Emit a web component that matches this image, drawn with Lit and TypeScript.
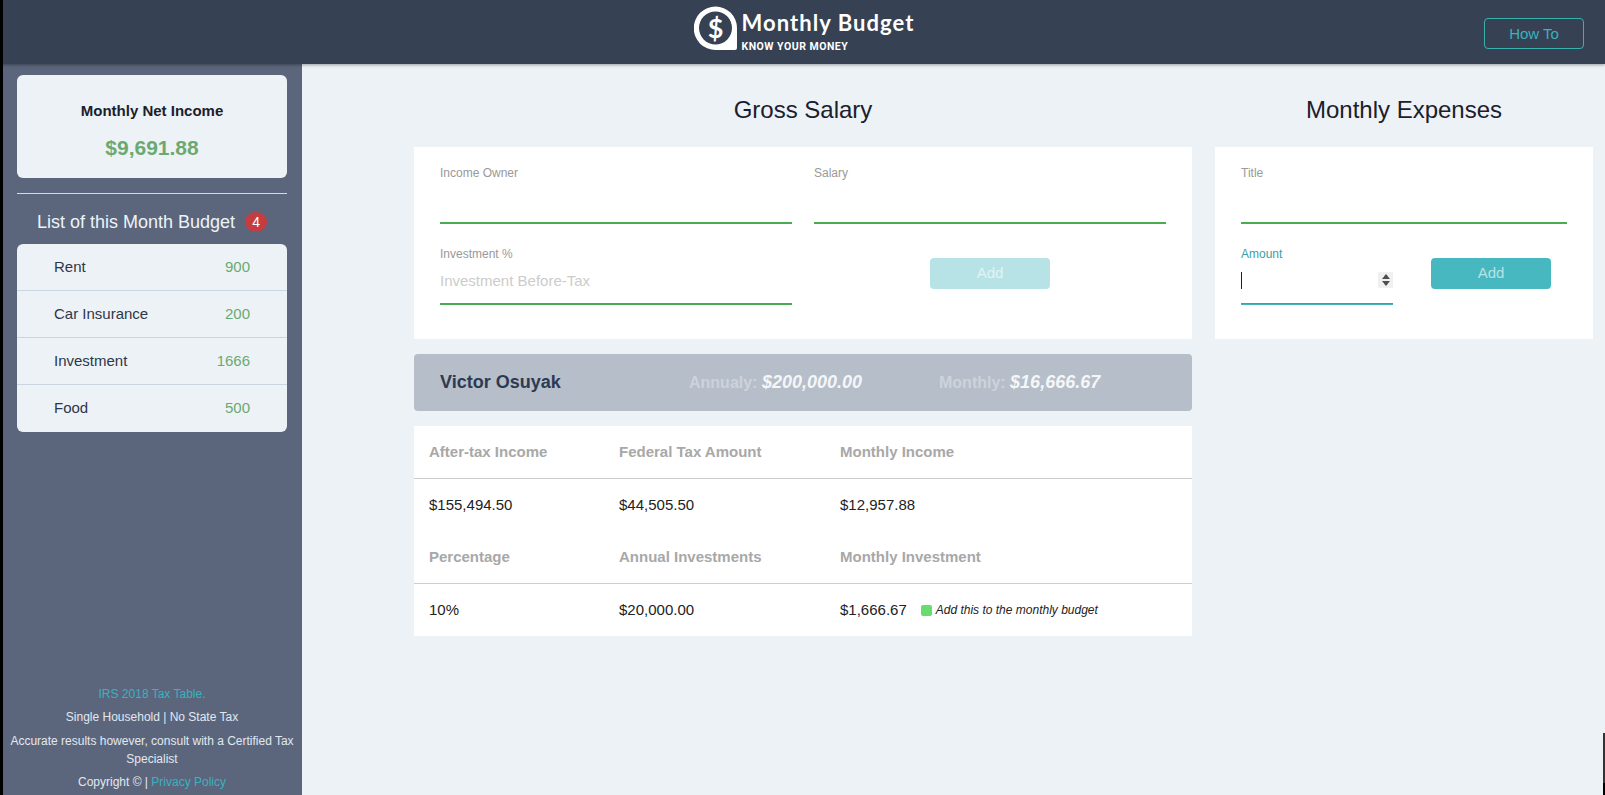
import { LitElement, html, css } from "lit";
import { customElement } from "lit/decorators.js";

@customElement("app-root")
export class AppRoot extends LitElement {
  static styles = css`
    :host { display: block; height: 795px; width: 1605px; overflow: hidden; font-family: "Liberation Sans", Arial, sans-serif; background: #edf2f6; color: #1a202c; position: relative; }
    * { box-sizing: border-box; }
    .edge { position: absolute; left: 0; top: 0; width: 3px; height: 795px; background: #000; z-index: 3; }
    .topbar { height: 64px; background: #364154; display: grid; grid-template-columns: 1fr auto 1fr; align-items: center; box-shadow: 0 1px 3px rgba(0,0,0,.35); position: relative; z-index: 2; padding: 0 21px 0 24px; }
    .logo { display: flex; align-items: flex-start; gap: 5px; color: #fff; margin-top: -6px; }
    .logo svg { display: block; margin-left: 1px; }
    .logo-text { display: flex; flex-direction: column; width: 174px; white-space: nowrap; }
    .logo-title { font-family: "Lato", sans-serif; font-weight: 700; font-size: 22px; line-height: 26px; letter-spacing: 1.05px; margin-top: 4px; }
    .logo-sub { font-family: "Roboto", sans-serif; font-weight: 700; font-size: 10.5px; line-height: 13px; letter-spacing: .5px; margin-top: 4px; }
    .howto { justify-self: end; width: 100px; height: 31px; margin-top: 2px; border: 1px solid #38b2ac; border-radius: 4px; color: #38b2c0; font-size: 15px; display: flex; align-items: center; justify-content: center; }
    .body { display: flex; height: 731px; }
    .side { width: 302px; flex: none; background: #5b667c; padding: 11px 15px 0 17px; display: flex; flex-direction: column; color: #edf2f7; }
    .net { height: 103px; background: #edf2f6; border-radius: 6px; display: flex; flex-direction: column; align-items: center; color: #1a202c; }
    .net b { font-size: 15px; margin-top: 27px; line-height: 18px; }
    .net strong { font-size: 21px; color: #6aaa72; margin-top: 16px; line-height: 24px; }
    .hr { height: 1px; background: #d5dae2; margin-top: 15px; }
    .listhead { display: flex; justify-content: center; align-items: center; gap: 10px; font-size: 18px; height: 50px; padding-top: 6px; }
    .badge { width: 22px; height: 20px; border-radius: 50%; background: #c53d40; color: #fff; font-size: 14px; display: flex; align-items: center; justify-content: center; }
    .list { background: #edf2f6; border-radius: 6px; overflow: hidden; }
    .row { height: 47px; display: flex; justify-content: space-between; align-items: center; padding: 0 37px 2px 37px; font-size: 15px; color: #2d3748; border-bottom: 1px solid #cbd5e0; }
    .row:last-child { border-bottom: 0; }
    .row span:last-child { color: #6aaa72; }
    .foot { margin-top: auto; text-align: center; font-size: 12px; line-height: 18px; color: #e2e8f0; margin-left: -9px; margin-right: -9px; }
    .foot div { margin-bottom: 5.5px; }
    .foot div:last-child { margin-bottom: 4px; }
    .teal { color: #38b2c0; }
    .main { flex: 1; display: grid; grid-template-columns: 778px 378px; column-gap: 23px; padding: 0 12px 0 112px; }
    h2 { font-weight: 400; font-size: 24px; line-height: 28px; text-align: center; margin: 32px 0 23px; color: #1a202c; }
    .panel { background: #fff; height: 192px; padding: 18px 26px; }
    label { display: block; font-size: 12px; line-height: 14px; color: #999; }
    .field { height: 59px; padding-top: 1px; border-bottom: 2px solid #48ac52; }
    .g { display: grid; grid-template-columns: 352px 352px; column-gap: 22px; }
    .ph { font-size: 15px; color: #ccc; margin-top: 11px; line-height: 18px; }
    .btn { width: 120px; height: 31px; border-radius: 4px; background: #48b8c0; color: #b8e2e6; font-size: 15px; display: flex; align-items: center; justify-content: center; margin-top: 12px; padding-bottom: 2px; }
    .btn.dis { background: #b8e3e6; color: #e0f3f5; }
    .f2 { margin-top: 22px; }
    .btncell { display: flex; justify-content: center; align-items: flex-start; }
    .gr { display: grid; grid-template-columns: 152px 1fr; }
    .gr .btncell { justify-content: flex-start; padding-left: 38px; }
    .person { background: #b6bec9; border-radius: 4px; height: 57px; margin-top: 15px; display: flex; align-items: center; padding-left: 26px; }
    .person .name { font-weight: 700; font-size: 18px; color: #2d3a52; width: 249px; }
    .person .m { font-weight: 700; font-size: 16px; color: #cdd3db; width: 250px; }
    .person .m em { font-size: 18px; color: #f4f6f8; }
    .table { background: #fff; margin-top: 15px; }
    .tr { display: grid; grid-template-columns: 190px 221px 1fr; padding: 0 0 2px 15px; align-items: center; }
    .th { height: 53px; border-bottom: 1px solid #cbcdd0; font-weight: 700; font-size: 15px; color: #a8a8a8; }
    .td { font-size: 15px; color: #222; height: 52px; }
    .hint { display: inline-flex; align-items: center; gap: 4px; font-style: italic; font-size: 12px; margin-left: 14px; vertical-align: -1px; }
    .dot { width: 11px; height: 11px; border-radius: 2px; background: #68dc6c; }
    .amount { border-bottom: 1px solid #45b2b8; box-shadow: inset 0 -1px 0 #48ac52; height: 59px; padding-top: 1px; position: relative; }
    .amount label { color: #3d9ea6; }
    .caret { position: absolute; left: 0; top: 26px; width: 1px; height: 17px; background: #1a202c; }
    .spin { position: absolute; right: 0; top: 26px; width: 15px; height: 16px; background: #f0f0f0; display: flex; flex-direction: column; align-items: center; justify-content: center; gap: 2px; }
    .up { width: 0; height: 0; border-left: 4px solid transparent; border-right: 4px solid transparent; border-bottom: 5px solid #4a4f4a; }
    .dn { width: 0; height: 0; border-left: 4px solid transparent; border-right: 4px solid transparent; border-top: 5px solid #4a4f4a; }
    .strip { position: absolute; right: 0; top: 733px; width: 2px; height: 62px; background: #333; }
    .strip i { position: absolute; left: 0; bottom: 0; width: 2px; height: 12px; background: #000; }
  `;
  render() {
    const rows = [["Rent","900"],["Car Insurance","200"],["Investment","1666"],["Food","500"]];
    return html`
      <div class="edge"></div>
      <div class="topbar">
        <div></div>
        <div class="logo">
          <svg width="43" height="44" viewBox="0 0 43 44"><path fill-rule="evenodd" fill="#fff" d="M21.5 0.5A21.5 21.5 0 0 1 43 22V42a2 2 0 0 1-2 2H21.5A21.5 21.5 0 0 1 21.5 0.5zM21.5 5.5a16.5 16.5 0 1 0 0 33a16.5 16.5 0 1 0 0-33z"/><text x="21.5" y="31.5" text-anchor="middle" fill="#fff" font-family="Lato" font-weight="700" font-size="27">$</text></svg>
          <div class="logo-text"><span class="logo-title">Monthly Budget</span><span class="logo-sub">KNOW YOUR MONEY</span></div>
        </div>
        <div class="howto">How To</div>
      </div>
      <div class="body">
        <aside class="side">
          <div class="net"><b>Monthly Net Income</b><strong>$9,691.88</strong></div>
          <div class="hr"></div>
          <div class="listhead"><span>List of this Month Budget</span><span class="badge">4</span></div>
          <div class="list">${rows.map(r => html`<div class="row"><span>${r[0]}</span><span>${r[1]}</span></div>`)}</div>
          <div class="foot">
            <div class="teal">IRS 2018 Tax Table.</div>
            <div>Single Household | No State Tax</div>
            <div>Accurate results however, consult with a Certified Tax Specialist</div>
            <div>Copyright © | <span class="teal">Privacy Policy</span></div>
          </div>
        </aside>
        <main class="main">
          <section>
            <h2>Gross Salary</h2>
            <div class="panel">
              <div class="g">
                <div class="field"><label>Income Owner</label></div>
                <div class="field"><label>Salary</label></div>
                <div class="field f2"><label>Investment %</label><div class="ph">Investment Before-Tax</div></div>
                <div class="btncell f2"><div class="btn dis">Add</div></div>
              </div>
            </div>
            <div class="person"><span class="name">Victor Osuyak</span><span class="m">Annualy: <em>$200,000.00</em></span><span class="m">Monthly: <em>$16,666.67</em></span></div>
            <div class="table">
              <div class="tr th"><span>After-tax Income</span><span>Federal Tax Amount</span><span>Monthly Income</span></div>
              <div class="tr td"><span>$155,494.50</span><span>$44,505.50</span><span>$12,957.88</span></div>
              <div class="tr th"><span>Percentage</span><span>Annual Investments</span><span>Monthly Investment</span></div>
              <div class="tr td"><span>10%</span><span>$20,000.00</span><span>$1,666.67<span class="hint"><i class="dot"></i>Add this to the monthly budget</span></span></div>
            </div>
          </section>
          <section>
            <h2>Monthly Expenses</h2>
            <div class="panel">
              <div class="field"><label>Title</label></div>
              <div class="gr f2">
                <div class="amount"><label>Amount</label><i class="caret"></i><div class="spin"><i class="up"></i><i class="dn"></i></div></div>
                <div class="btncell"><div class="btn">Add</div></div>
              </div>
            </div>
          </section>
        </main>
      </div>
      <div class="strip"><i></i></div>
    `;
  }
}
